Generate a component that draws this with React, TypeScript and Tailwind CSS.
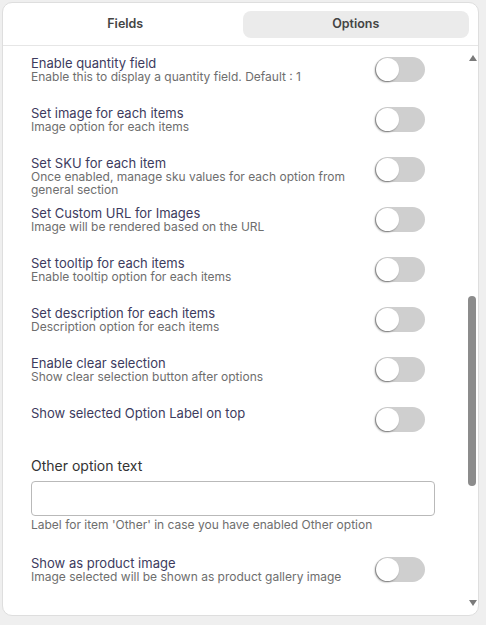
import React from "react";

const rows: { title: string; desc?: string }[] = [
  { title: "Enable quantity field", desc: "Enable this to display a quantity field. Default : 1" },
  { title: "Set image for each items", desc: "Image option for each items" },
  { title: "Set SKU for each item", desc: "Once enabled, manage sku values for each option from general section" },
  { title: "Set Custom URL for Images", desc: "Image will be rendered based on the URL" },
  { title: "Set tooltip for each items", desc: "Enable tooltip option for each items" },
  { title: "Set description for each items", desc: "Description option for each items" },
  { title: "Enable clear selection", desc: "Show clear selection button after options" },
  { title: "Show selected Option Label on top" },
];

function Toggle() {
  return (
    <div className="mt-[1px] h-[25px] w-[50px] shrink-0 rounded-full bg-[#cfcfcf] relative">
      <div className="absolute left-[1px] top-[1px] h-[23px] w-[23px] rounded-full bg-white shadow-[-1px_1px_2px_rgba(0,0,0,0.45)]" />
    </div>
  );
}

function Row({ title, desc }: { title: string; desc?: string }) {
  return (
    <div className="flex h-[50px] items-start pl-[28px]">
      <div className="w-[330px]">
        <div className="text-[13px] leading-[14px] text-[#3d3b5e]">{title}</div>
        {desc && <div className="text-[12px] leading-[13px] text-[#6e6e6e]">{desc}</div>}
      </div>
      <div className="ml-[14px]">
        <Toggle />
      </div>
    </div>
  );
}

export default function App() {
  return (
    <div className="h-[625px] w-[486px] bg-[#efefef] pl-[2px] pt-[2px]" style={{ fontFamily: "Inter, 'Noto Sans', sans-serif" }}>
      <div className="flex h-[614px] w-[477px] flex-col overflow-hidden rounded-[10px] border border-[#dedede] bg-white">
        <div className="flex gap-[4px] px-[9px] pt-[8px] pb-[7px] border-b border-[#e6e6e6]">
          <div className="flex h-[27px] flex-1 items-center justify-center text-[12.5px] font-semibold text-[#444]">Fields</div>
          <div className="flex h-[27px] flex-1 items-center justify-center rounded-[8px] bg-[#ebebeb] text-[12.5px] font-semibold text-[#444]">Options</div>
        </div>
        <div className="relative flex flex-1">
          <div className="flex-1 pt-[10px]">
            {rows.map((r) => (
              <Row key={r.title} title={r.title} desc={r.desc} />
            ))}
            <div className="pl-[28px]">
              <div className="text-[14px] leading-[20px] text-[#333]">Other option text</div>
              <div className="mt-[5px] h-[35px] w-[404px] rounded-[4px] border border-[#b9b9b9]" />
              <div className="mt-[2px] text-[12px] leading-[13px] text-[#6e6e6e]">Label for item 'Other' in case you have enabled Other option</div>
            </div>
            <div className="mt-[25px]">
              <Row title="Show as product image" desc="Image selected will be shown as product gallery image" />
            </div>
          </div>
          <div className="relative w-[14px] shrink-0">
            <div className="absolute left-[5px] top-[9px] h-0 w-0 border-x-[4px] border-b-[6px] border-x-transparent border-b-[#7a7a7a]" />
            <div className="absolute left-[4px] top-[250px] h-[190px] w-[8px] rounded-full bg-[#8c8c8c]" />
            <div className="absolute left-[5px] bottom-[9px] h-0 w-0 border-x-[4px] border-t-[6px] border-x-transparent border-t-[#7a7a7a]" />
          </div>
        </div>
      </div>
    </div>
  );
}
